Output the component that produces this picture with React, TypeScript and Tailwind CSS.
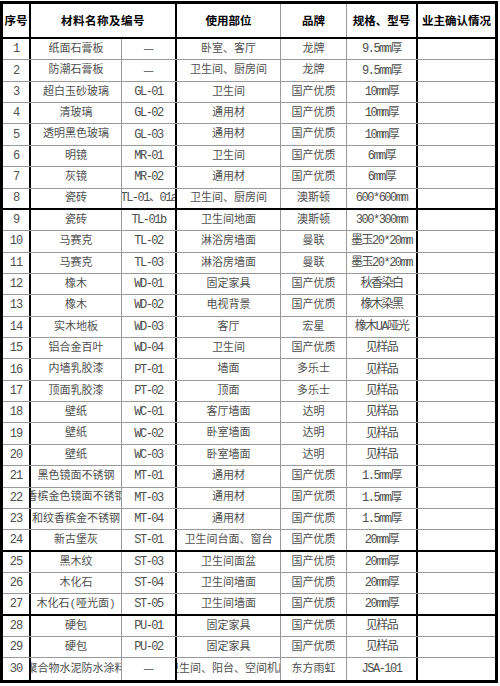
import React from "react";

type Row = [string, string, string, string, string, string];

const rows: Row[] = [
  ["1", "纸面石膏板", "—", "卧室、客厅", "龙牌", "9.5mm厚"],
  ["2", "防潮石膏板", "—", "卫生间、厨房间", "龙牌", "9.5mm厚"],
  ["3", "超白玉砂玻璃", "GL-01", "卫生间", "国产优质", "10mm厚"],
  ["4", "清玻璃", "GL-02", "通用材", "国产优质", "10mm厚"],
  ["5", "透明黑色玻璃", "GL-03", "通用材", "国产优质", "10mm厚"],
  ["6", "明镜", "MR-01", "卫生间", "国产优质", "6mm厚"],
  ["7", "灰镜", "MR-02", "通用材", "国产优质", "6mm厚"],
  ["8", "瓷砖", "TL-01、01a", "卫生间、厨房间", "澳斯顿", "600*600mm"],
  ["9", "瓷砖", "TL-01b", "卫生间地面", "澳斯顿", "300*300mm"],
  ["10", "马赛克", "TL-02", "淋浴房墙面", "曼联", "墨玉20*20mm"],
  ["11", "马赛克", "TL-03", "淋浴房墙面", "曼联", "墨玉20*20mm"],
  ["12", "橡木", "WD-01", "固定家具", "国产优质", "秋香染白"],
  ["13", "橡木", "WD-02", "电视背景", "国产优质", "橡木染黑"],
  ["14", "实木地板", "WD-03", "客厅", "宏星", "橡木UA哑光"],
  ["15", "铝合金百叶", "WD-04", "卫生间", "国产优质", "见样品"],
  ["16", "内墙乳胶漆", "PT-01", "墙面", "多乐士", "见样品"],
  ["17", "顶面乳胶漆", "PT-02", "顶面", "多乐士", "见样品"],
  ["18", "壁纸", "WC-01", "客厅墙面", "达明", "见样品"],
  ["19", "壁纸", "WC-02", "卧室墙面", "达明", "见样品"],
  ["20", "壁纸", "WC-03", "卧室墙面", "达明", "见样品"],
  ["21", "黑色镜面不锈钢", "MT-01", "通用材", "国产优质", "1.5mm厚"],
  ["22", "香槟金色镜面不锈钢", "MT-03", "通用材", "国产优质", "1.5mm厚"],
  ["23", "和纹香槟金不锈钢", "MT-04", "通用材", "国产优质", "1.5mm厚"],
  ["24", "新古堡灰", "ST-01", "卫生间台面、窗台", "国产优质", "20mm厚"],
  ["25", "黑木纹", "ST-03", "卫生间面盆", "国产优质", "20mm厚"],
  ["26", "木化石", "ST-04", "卫生间墙面", "国产优质", "20mm厚"],
  ["27", "木化石(哑光面)", "ST-05", "卫生间墙面", "国产优质", "20mm厚"],
  ["28", "硬包", "PU-01", "固定家具", "国产优质", "见样品"],
  ["29", "硬包", "PU-02", "固定家具", "国产优质", "见样品"],
  ["30", "聚合物水泥防水涂料", "—", "卫生间、阳台、空间机房", "东方雨虹", "JSA-101"],
];

const thickAfter = new Set([8, 24, 27]);

function Cell({ className, children }: { className: string; children?: React.ReactNode }) {
  return (
    <div className={`flex h-full shrink-0 items-center justify-center overflow-hidden whitespace-nowrap ${className}`}>
      <span className="shrink-0">{children}</span>
    </div>
  );
}

function Code({ text }: { text: string }) {
  if (text === "—") {
    return <span className="font-['Noto_Sans_CJK_SC',sans-serif] text-[12px] tracking-normal">—</span>;
  }
  return <>{text}</>;
}

export default function App() {
  return (
    <div className="h-[686px] w-[500px] bg-white pt-[1px]">
      <div className="flex w-[498px] flex-col border-[3px] border-black font-['Liberation_Mono','Noto_Sans_CJK_SC',monospace] text-[11px] text-[#505050]">
        <div className="flex h-[35px] border-b-2 border-b-black font-['Noto_Sans_CJK_SC','Noto_Sans',sans-serif] text-[11.5px] font-bold text-black">
          <Cell className="w-[28px] border-r-2 border-r-black">序号</Cell>
          <Cell className="w-[146px] border-r-2 border-r-black tracking-[0.5px]">材料名称及编号</Cell>
          <Cell className="w-[104px] border-r border-r-[#999]">使用部位</Cell>
          <Cell className="w-[66px] border-r border-r-[#999]">品牌</Cell>
          <Cell className="w-[71px] border-r-2 border-r-black">规格、型号</Cell>
          <Cell className="w-[77px]">业主确认情况</Cell>
        </div>
        {rows.map((r, i) => {
          const n = i + 1;
          const rowCls =
            n === 30
              ? "flex h-[21.37px]"
              : thickAfter.has(n)
              ? "flex h-[21.37px] border-b-2 border-b-black"
              : "flex h-[21.37px] border-b border-b-[#999]";
          return (
            <div key={n} className={rowCls}>
              <Cell className="w-[28px] border-r-2 border-r-black text-[12px] tracking-[-1px]">{r[0]}</Cell>
              <Cell className="w-[91px] border-r border-r-[#999]">{r[1]}</Cell>
              <Cell className="w-[55px] border-r-2 border-r-black text-[12px] tracking-[-1.5px]">
                <Code text={r[2]} />
              </Cell>
              <Cell className="w-[104px] border-r border-r-[#999]">{r[3]}</Cell>
              <Cell className="w-[66px] border-r border-r-[#999]">{r[4]}</Cell>
              <Cell className="w-[71px] border-r-2 border-r-black text-[12px] tracking-[-1.5px]">{r[5]}</Cell>
              <Cell className="w-[77px]" />
            </div>
          );
        })}
      </div>
    </div>
  );
}
